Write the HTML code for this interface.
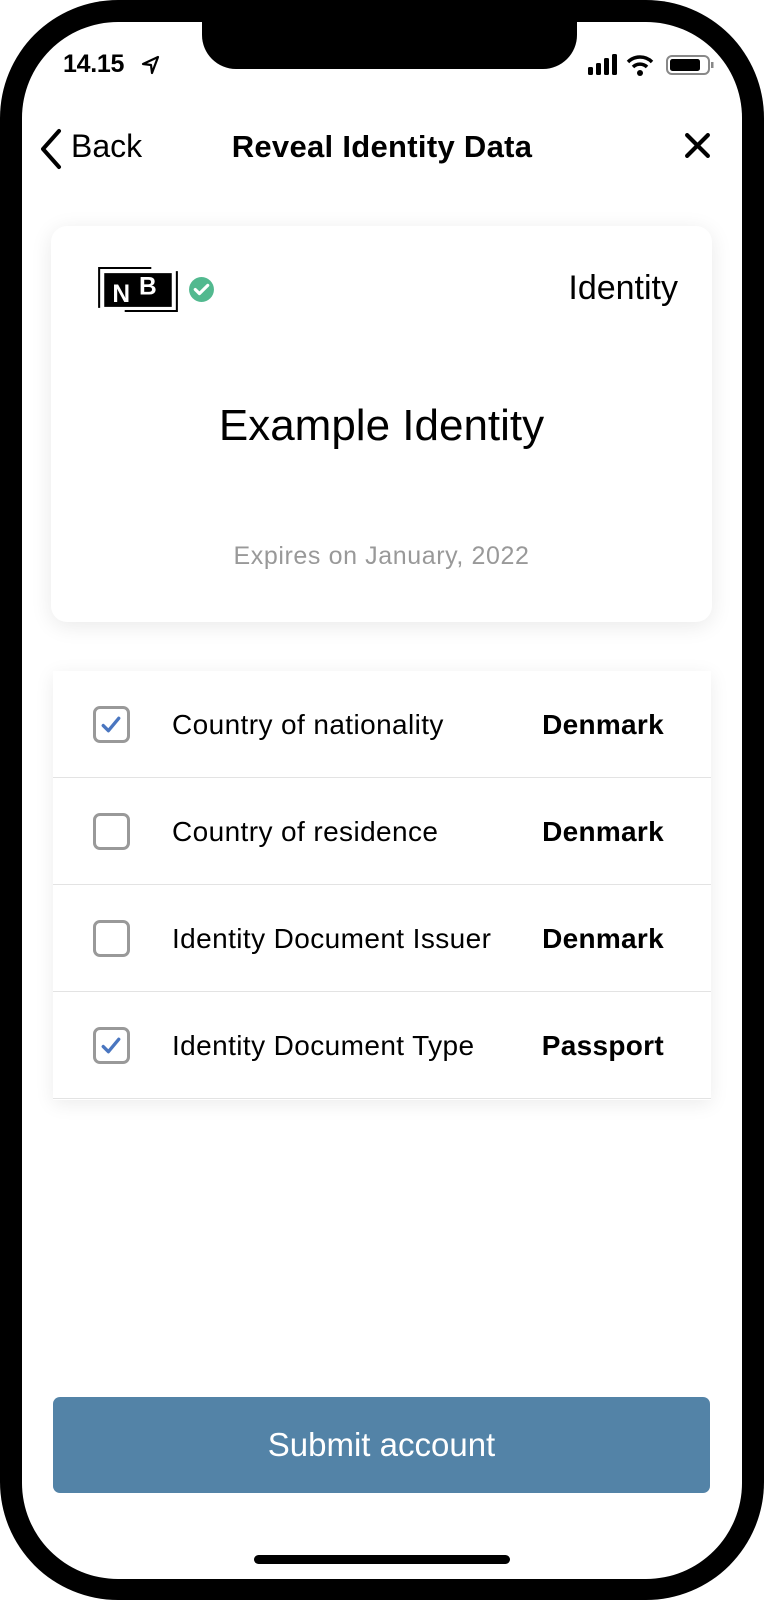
<!DOCTYPE html>
<html><head><meta charset="utf-8"><style>
*{margin:0;padding:0;box-sizing:border-box}
body{width:764px;height:1600px;background:#fff;position:relative;overflow:hidden;font-family:"Liberation Sans",sans-serif;color:#000}
.frame{position:absolute;left:0;top:0;width:764px;height:1600px;background:#000;border-radius:118px}
.screen{position:absolute;left:22px;top:22px;width:720px;height:1557px;background:#fff;border-radius:96px;overflow:hidden}
.notch{position:absolute;left:202px;top:0;width:375px;height:69px;background:#000;border-radius:0 0 34px 34px}
.abs{position:absolute}
.card{position:absolute;left:51px;top:226px;width:661px;height:396px;background:#fff;border-radius:16px;box-shadow:0 4px 22px rgba(0,0,0,0.09)}
.list{position:absolute;left:53px;top:671px;width:658px;height:429px;background:#fff;box-shadow:0 4px 18px rgba(0,0,0,0.08)}
.row{position:absolute;left:0;width:658px;height:107px;border-bottom:1px solid #e3e3e3}
.cb{position:absolute;left:40px;top:35px;width:37px;height:37px;border:3px solid #999;border-radius:7px}
.lbl{position:absolute;left:119px;top:0;line-height:107px;font-size:28px;letter-spacing:0.4px}
.val{position:absolute;right:47px;top:0;line-height:107px;font-size:28px;font-weight:bold;letter-spacing:0.3px}
</style></head><body>
<div class="frame"></div>
<div class="screen"></div>
<div class="notch"></div>
<div class="abs" style="left:63px;top:50px;font-size:25px;font-weight:bold;letter-spacing:-0.3px">14.15</div>
<svg class="abs" style="left:141px;top:55px" width="20" height="20" viewBox="0 0 20 20"><path d="M17 2 L2 9 L10 10 L11 18 Z" fill="none" stroke="#000" stroke-width="2.2" stroke-linejoin="round"/></svg>
<svg class="abs" style="left:586px;top:53px" width="130" height="24" viewBox="0 0 130 24">
<rect x="2" y="14" width="5" height="8" rx="1.5"/><rect x="10" y="10" width="5" height="12" rx="1.5"/><rect x="18" y="5" width="5" height="17" rx="1.5"/><rect x="26" y="1" width="5" height="21" rx="1.5"/>
<path d="M42 9 A17 17 0 0 1 66 9" fill="none" stroke="#000" stroke-width="3.5"/><path d="M47 14 A10 10 0 0 1 61 14" fill="none" stroke="#000" stroke-width="3.5"/><circle cx="54" cy="20" r="3"/>
<rect x="81" y="3" width="42" height="18" rx="5" fill="none" stroke="#888" stroke-width="2"/><rect x="84" y="6" width="30" height="12" rx="2.5"/><rect x="125" y="9" width="2.5" height="6" fill="#888"/>
</svg>
<svg class="abs" style="left:37px;top:128px" width="26" height="42" viewBox="0 0 26 42"><path d="M22 3 L6 21 L22 39" fill="none" stroke="#000" stroke-width="4" stroke-linecap="round" stroke-linejoin="round"/></svg>
<div class="abs" style="left:71px;top:126px;font-size:32px;line-height:40px">Back</div>
<div class="abs" style="left:0;width:764px;text-align:center;top:127px;font-size:31px;line-height:40px;font-weight:bold;letter-spacing:0.3px">Reveal Identity Data</div>
<svg class="abs" style="left:684px;top:132px" width="27" height="27" viewBox="0 0 26 26"><path d="M3 3 L23 23 M23 3 L3 23" stroke="#000" stroke-width="4" stroke-linecap="round"/></svg>

<div class="card"></div>
<svg class="abs" style="left:98px;top:267px" width="80" height="45" viewBox="0 0 78 44">
<path d="M1 40 V1 H52" fill="none" stroke="#000" stroke-width="2"/>
<path d="M77 4 V43 H26" fill="none" stroke="#000" stroke-width="2"/>
<rect x="6" y="6" width="66" height="33" fill="#000"/>
<text x="14" y="34" font-family="Liberation Sans" font-weight="bold" font-size="24" fill="#fff">N</text>
<text x="40" y="27" font-family="Liberation Sans" font-weight="bold" font-size="24" fill="#fff">B</text>
</svg>
<svg class="abs" style="left:188px;top:276px" width="27" height="27" viewBox="0 0 26 26"><circle cx="13" cy="13" r="12" fill="#52b98f"/><path d="M7 13 L11 17 L19 9" fill="none" stroke="#fff" stroke-width="3" stroke-linecap="round" stroke-linejoin="round"/></svg>
<div class="abs" style="right:86px;top:268px;font-size:34px;line-height:40px">Identity</div>
<div class="abs" style="left:51px;width:661px;text-align:center;top:400px;font-size:44px;line-height:52px">Example Identity</div>
<div class="abs" style="left:51px;width:661px;text-align:center;top:541px;font-size:25px;line-height:30px;color:#999;letter-spacing:0.6px">Expires on January, 2022</div>

<div class="list">
<div class="row" style="top:0"><div class="cb"><svg width="31" height="31" viewBox="0 0 30 30" style="position:absolute;left:0;top:0"><path d="M7 16 L12 21 L22 9" fill="none" stroke="#4a76c0" stroke-width="3.2" stroke-linecap="round" stroke-linejoin="round"/></svg></div><div class="lbl">Country of nationality</div><div class="val">Denmark</div></div>
<div class="row" style="top:107px"><div class="cb"></div><div class="lbl">Country of residence</div><div class="val">Denmark</div></div>
<div class="row" style="top:214px"><div class="cb"></div><div class="lbl">Identity Document Issuer</div><div class="val">Denmark</div></div>
<div class="row" style="top:321px"><div class="cb"><svg width="31" height="31" viewBox="0 0 30 30" style="position:absolute;left:0;top:0"><path d="M7 16 L12 21 L22 9" fill="none" stroke="#4a76c0" stroke-width="3.2" stroke-linecap="round" stroke-linejoin="round"/></svg></div><div class="lbl">Identity Document Type</div><div class="val">Passport</div></div>
</div>

<div class="abs" style="left:53px;top:1397px;width:657px;height:96px;background:#5383a7;border-radius:7px;color:#fff;font-size:33px;text-align:center;line-height:96px">Submit account</div>
<div class="abs" style="left:254px;top:1555px;width:256px;height:9px;background:#000;border-radius:5px"></div>
</body></html>
